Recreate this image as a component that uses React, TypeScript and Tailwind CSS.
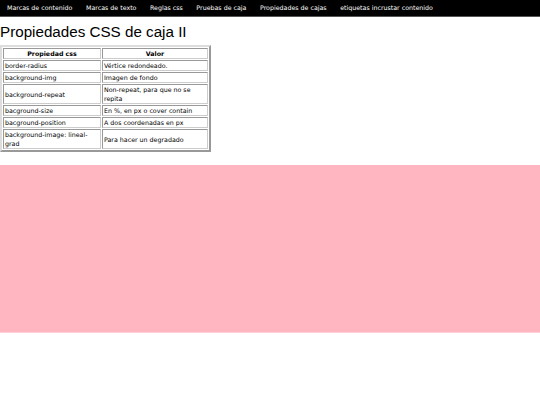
import React from 'react';

const navItems = [
  'Marcas de contenido',
  'Marcas de texto',
  'Reglas css',
  'Pruebas de caja',
  'Propiedades de cajas',
  'etiquetas incrustar contenido',
];

const rows: [string, string][] = [
  ['border-radius', 'Vértice redondeado.'],
  ['background-img', 'Imagen de fondo'],
  ['background-repeat', 'Non-repeat, para que no se repita'],
  ['bacground-size', 'En %, en px o cover contain'],
  ['bacground-position', 'A dos coordenadas en px'],
  ['background-image: lineal-grad', 'Para hacer un degradado'],
];

const cell =
  'border border-t-[#999] border-l-[#999] border-r-[#ccc] border-b-[#ccc] px-[1px] py-0 align-middle';

export default function App() {
  return (
    <div className="min-h-[405px] bg-white text-black">
      {/* barra de navegación */}
      <nav className="flex h-[17px] items-center gap-[13.5px] border-b border-[#555] bg-black pl-[7px] font-['DejaVu_Sans',Verdana,sans-serif] text-[6.3px] text-white">
        {navItems.map((item) => (
          <span key={item} className="whitespace-nowrap">
            {item}
          </span>
        ))}
      </nav>

      <h1 className="mt-[5px] font-['Liberation_Sans',Arial,sans-serif] text-[15.2px] leading-[19px]">
        Propiedades CSS de caja II
      </h1>

      {/* tabla de propiedades */}
      <table className="mt-[4px] w-[211px] border-separate border-spacing-[1px] border-2 border-t-[#ddd] border-l-[#ddd] border-r-[#999] border-b-[#999] font-['DejaVu_Sans',Verdana,sans-serif] text-[6.3px] leading-[9px]">
        <thead>
          <tr>
            <th className={`${cell} w-[98px] text-center font-bold`}>Propiedad css</th>
            <th className={`${cell} text-center font-bold`}>Valor</th>
          </tr>
        </thead>
        <tbody>
          {rows.map(([prop, val]) => (
            <tr key={prop}>
              <td className={cell}>{prop}</td>
              <td className={cell}>{val}</td>
            </tr>
          ))}
        </tbody>
      </table>

      {/* bloque rosa */}
      <div className="mt-[13px] h-[168px] border-b border-[#ffd0d8] bg-[#ffb6c1]" />
    </div>
  );
}
